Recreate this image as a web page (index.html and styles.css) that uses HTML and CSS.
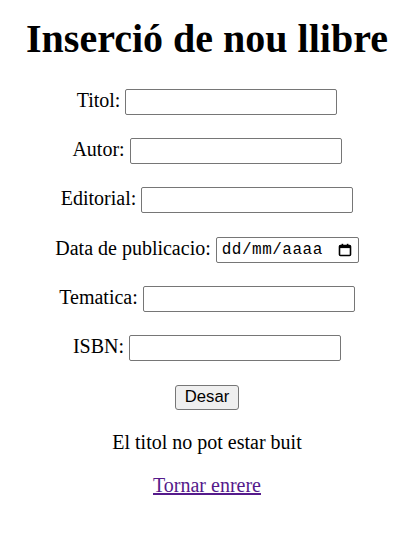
FILE: index.html
```html
<!DOCTYPE html>
<html lang="ca">
<head>
<meta charset="utf-8">
<title>Inserció de nou llibre</title>
<link rel="stylesheet" href="styles.css">
</head>
<body>
<h1 class="title">Inserció de nou llibre</h1>
<form class="form">
  <p class="row"><label>Titol: <input class="field" type="text"></label></p>
  <p class="row"><label>Autor: <input class="field" type="text"></label></p>
  <p class="row"><label>Editorial: <input class="field" type="text"></label></p>
  <p class="row"><label>Data de publicacio: <span class="date"><span class="date-text">dd/mm/aaaa</span><svg class="cal" width="14" height="14" viewBox="0 0 14 14"><rect x="1.5" y="2.5" width="11" height="10" rx="1" fill="none" stroke="#000" stroke-width="1.6"/><rect x="1.5" y="2.5" width="11" height="2.6" fill="#000"/><rect x="3.6" y="0.8" width="1.6" height="2.4" fill="#000"/><rect x="8.8" y="0.8" width="1.6" height="2.4" fill="#000"/></svg></span></label></p>
  <p class="row"><label>Tematica: <input class="field" type="text"></label></p>
  <p class="row"><label>ISBN: <input class="field" type="text"></label></p>
  <p class="row-btn"><button class="btn" type="button">Desar</button></p>
</form>
<p class="msg">El titol no pot estar buit</p>
<p class="back"><a class="link" href="#">Tornar enrere</a></p>
</body>
</html>
```

FILE: styles.css
```css
html, body {
  background: #fff;
}
body {
  margin: 15px 10px 10px;
  font-family: "Liberation Serif", "Times New Roman", serif;
  font-size: 20px;
  color: #000;
  text-align: center;
}
.title {
  font-size: 40px;
  font-weight: bold;
  margin: 0 0 26.8px;
}
.form {
  margin: 0;
}
.row, .row-btn, .msg, .back {
  margin: 20px 0;
}
.row {
  padding-bottom: 3.3px;
}
.row-btn {
  min-height: 26px;
}
.field {
  box-sizing: border-box;
  width: 212px;
  height: 26px;
  border: 1px solid #767676;
  border-radius: 2px;
  padding: 1px 3px;
  font-family: "Liberation Sans", Arial, sans-serif;
  font-size: 16.67px;
  background: #fff;
  margin: 0;
  vertical-align: top;
}
.date {
  display: inline-flex;
  align-items: center;
  justify-content: space-between;
  box-sizing: border-box;
  width: 143px;
  height: 26px;
  border: 1px solid #767676;
  border-radius: 2px;
  padding: 0 6px 0 5px;
  vertical-align: top;
  background: #fff;
}
.date-text {
  font-family: "Liberation Mono", "DejaVu Sans Mono", monospace;
  font-size: 16px;
  line-height: 1;
  letter-spacing: 0.5px;
}
.cal {
  display: block;
}
.btn {
  box-sizing: border-box;
  height: 25px;
  width: 64px;
  padding: 0;
  border: 1px solid #767676;
  border-radius: 3px;
  background: #efefef;
  font-family: "Liberation Sans", Arial, sans-serif;
  font-size: 16.67px;
  color: #000;
  vertical-align: top;
}
.link {
  color: #551a8b;
  text-decoration: underline;
}
```
